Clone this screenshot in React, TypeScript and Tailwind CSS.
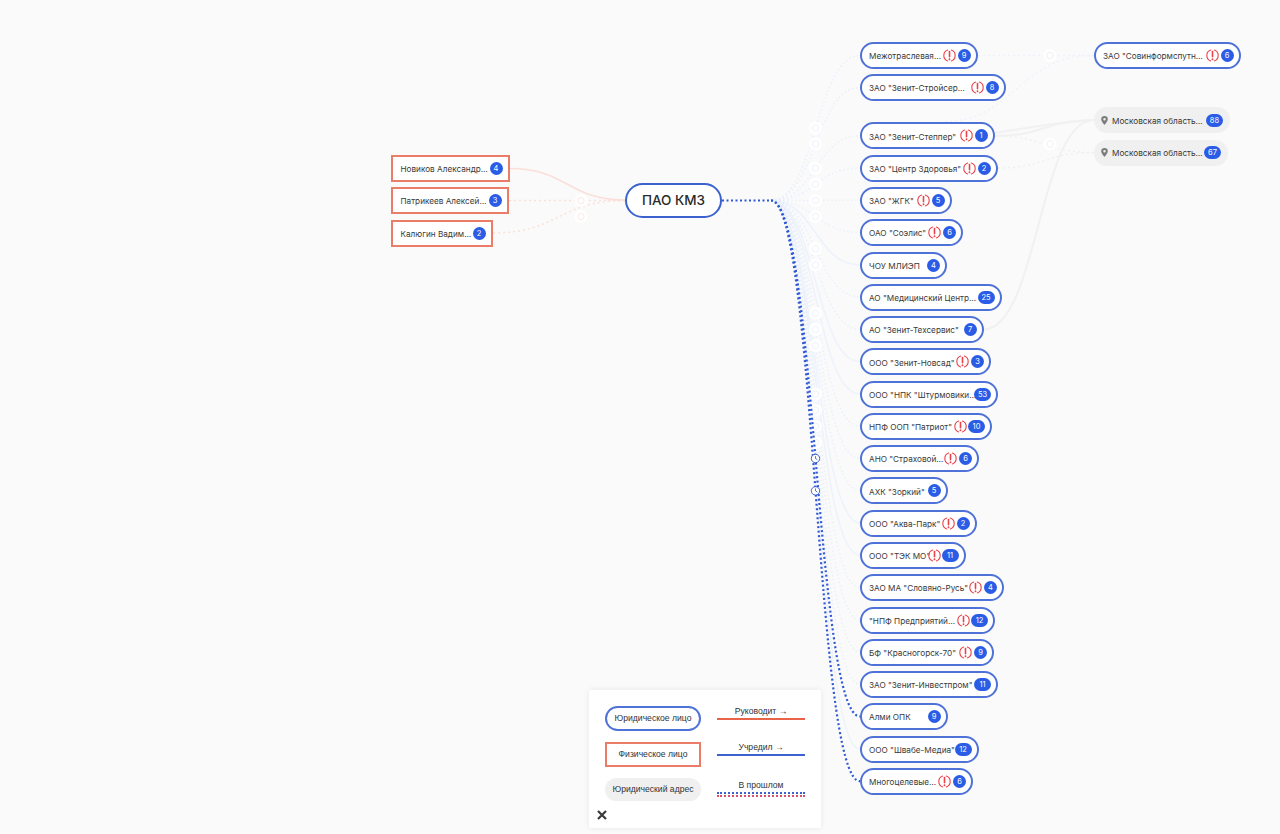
import React from "react";

type N = { name: string; cy: number; right: number; alert?: boolean; count: number };

const nodes: N[] = [
  { name: "Межотраслевая…", cy: 55.5, right: 977.5, alert: true, count: 9 },
  { name: 'ЗАО "Зенит-Стройсер…', cy: 87.5, right: 1005.5, alert: true, count: 8 },
  { name: 'ЗАО "Зенит-Степпер"', cy: 135.7, right: 994.5, alert: true, count: 1 },
  { name: 'ЗАО "Центр Здоровья"', cy: 168, right: 997.5, alert: true, count: 2 },
  { name: 'ЗАО "ЖГК"', cy: 200.3, right: 951.5, alert: true, count: 5 },
  { name: 'ОАО "Соэлис"', cy: 232.5, right: 963, alert: true, count: 6 },
  { name: "ЧОУ МЛИЭП", cy: 265, right: 947, count: 4 },
  { name: 'АО "Медицинский Центр…', cy: 297, right: 1001.5, count: 25 },
  { name: 'АО "Зенит-Техсервис"', cy: 329.5, right: 983.5, count: 7 },
  { name: 'ООО "Зенит-Новсад"', cy: 361.7, right: 991, alert: true, count: 3 },
  { name: 'ООО "НПК "Штурмовики…', cy: 394, right: 998, count: 53 },
  { name: 'НПФ ООП "Патриот"', cy: 426.2, right: 992, alert: true, count: 10 },
  { name: 'АНО "Страховой…', cy: 458.5, right: 979, alert: true, count: 6 },
  { name: 'АХК "Зоркий"', cy: 490.8, right: 947.5, count: 5 },
  { name: 'ООО "Аква-Парк"', cy: 523, right: 976.5, alert: true, count: 2 },
  { name: 'ООО "ТЭК МО"', cy: 555.3, right: 965.5, alert: true, count: 11 },
  { name: 'ЗАО МА "Словяно-Русь"', cy: 587.6, right: 1004, alert: true, count: 4 },
  { name: '"НПФ Предприятий…', cy: 620, right: 995, alert: true, count: 12 },
  { name: 'БФ "Красногорск-70"', cy: 652, right: 994, alert: true, count: 9 },
  { name: 'ЗАО "Зенит-Инвестпром"', cy: 684.3, right: 998, count: 11 },
  { name: "Алми ОПК", cy: 716.5, right: 947.5, count: 9 },
  { name: 'ООО "Швабе-Медиа"', cy: 749, right: 978.5, count: 12 },
  { name: "Многоцелевые…", cy: 781.2, right: 973, alert: true, count: 6 },
];

const dottedIdx = [0, 1, 2, 3, 4, 5, 7, 8, 11, 12, 13, 16, 17, 18, 19];
const solidIdx = [6, 9, 10, 14, 15, 21];
const pastIdx = [20, 22];

function AlertIcon() {
  return (
    <svg width="13" height="13" viewBox="0 0 13 13" fill="none" className="block shrink-0">
      <path d="M4.7 1.1A5.7 5.7 0 0 0 4.7 11.9M8.3 1.1A5.7 5.7 0 0 1 8.3 11.9" stroke="#e8434a" strokeWidth="1.1" strokeLinecap="round" />
      <path d="M6.5 2.6V7.8" stroke="#e8434a" strokeWidth="1.6" strokeLinecap="round" />
      <circle cx="6.5" cy="10.2" r="0.95" fill="#e8434a" />
    </svg>
  );
}

function Badge({ n }: { n: number }) {
  return (
    <span className={"shrink-0 h-[13px] rounded-full bg-[#2a5ce6] text-white text-[7.5px] leading-[13px] text-center " + (n > 9 ? "w-[17px]" : "w-[13px]")}>
      {n}
    </span>
  );
}

function Company({ n, cy, left = 860 }: { n: N; cy: number; left?: number }) {
  return (
    <div
      className="absolute h-[27px] rounded-[14px] border-2 border-[#4f72d8] bg-white flex items-center pl-[7px] pr-[5px] text-[8.2px] text-[#3a3a3a] whitespace-nowrap"
      style={{ left, top: cy - 13.5, width: n.right - left }}
    >
      <span className="flex-1 min-w-0 pt-[2px]">{n.name}</span>
      {n.alert && <span className={n.count > 9 ? "mr-[1px]" : "mr-[2px]"}><AlertIcon /></span>}
      <Badge n={n.count} />
    </div>
  );
}

function Person({ name, count, top, width }: { name: string; count: number; top: number; width: number }) {
  return (
    <div
      className="absolute left-[391px] h-[27px] border-2 border-[#ea7c68] bg-white flex items-center pl-[7.5px] pr-[5.5px] text-[8.2px] text-[#3a3a3a] whitespace-nowrap"
      style={{ top, width }}
    >
      <span className="flex-1 min-w-0 pt-[2px]">{name}</span>
      <Badge n={count} />
    </div>
  );
}

function Address({ cy, width, count }: { cy: number; width: number; count: number }) {
  return (
    <div
      className="absolute left-[1094px] h-[26px] rounded-[13px] bg-[#f0f0f0] flex items-center pl-[7px] pr-[7px] text-[8.2px] text-[#3a3a3a] whitespace-nowrap"
      style={{ top: cy - 13, width }}
    >
      <svg width="7" height="9" viewBox="0 0 7 9" className="shrink-0 mr-[4px]">
        <path d="M3.5 0A3.3 3.3 0 0 0 .2 3.3C.2 5.5 3.5 9 3.5 9S6.8 5.5 6.8 3.3A3.3 3.3 0 0 0 3.5 0Zm0 4.5A1.2 1.2 0 1 1 3.5 2.1 1.2 1.2 0 0 1 3.5 4.5Z" fill="#7d7d7d" />
      </svg>
      <span className="flex-1 min-w-0 pt-[2px]">Московская область…</span>
      <Badge n={count} />
    </div>
  );
}

function curve(x1: number, y1: number, x2: number, y2: number) {
  const m = (x1 + x2) / 2;
  return `M${x1},${y1} C${m},${y1} ${m},${y2} ${x2},${y2}`;
}

function Ring({ x, y, c = "#eef3fb" }: { x: number; y: number; c?: string }) {
  return (
    <g>
      <circle cx={x} cy={y} r="6.5" fill="#ffffff" />
      <circle cx={x} cy={y} r="3.2" fill="none" stroke={c} strokeWidth="1" />
    </g>
  );
}

function Edges() {
  return (
    <svg className="absolute left-0 top-0" width="1280" height="834" fill="none">
      <path d={curve(510, 168.5, 625, 200)} stroke="#fbdfd8" strokeWidth="1.5" />
      <g stroke="#fbe0d9" strokeWidth="1.5" strokeDasharray="2 3">
        <path d="M509,200.5 L625,200.5" />
        <path d={curve(493, 233, 625, 200.5)} />
      </g>
      <Ring x={581} y={200.5} c="#fbeae6" />
      <Ring x={581} y={216.5} c="#fbeae6" />

      {solidIdx.map((i) => (
        <path key={i} d={curve(771, 200.5, 860, nodes[i].cy)} stroke="#edf2fc" strokeWidth="1.5" />
      ))}
      {dottedIdx.map((i) => (
        <path key={i} d={curve(771, 200.5, 860, nodes[i].cy)} stroke="#dfe9fb" strokeWidth="1.5" strokeDasharray="1.5 2.5" opacity="0.6" />
      ))}

      <g stroke="#f1f1f1" strokeWidth="2">
        <path d={curve(995, 136, 1094, 120)} />
        <path d={curve(983, 329.5, 1094, 120)} />
        <path d="M995,133 C1030,127 1060,122 1094,120" />
      </g>
      <g stroke="#f0f0f0" strokeWidth="1.5" strokeDasharray="2 3">
        <path d={curve(995, 136, 1094, 152.5)} />
        <path d={curve(998, 168, 1094, 152.5)} />
      </g>
      <g stroke="#edf2fb" strokeWidth="1.5" strokeDasharray="2 3">
        <path d="M978,55.5 L1094,55.5" />
        <path d={curve(940, 122, 1094, 55.5)} />
      </g>

      {dottedIdx.map((i) => (
        <Ring key={i} x={815.5} y={(200.5 + nodes[i].cy) / 2} />
      ))}
      <Ring x={1050} y={55.5} c="#f0f0f0" />
      <Ring x={1050} y={144} c="#f0f0f0" />

      <g stroke="#2f58d4" strokeWidth="2.2" strokeDasharray="2 2.5">
        <path d="M722,200.5 L771,200.5" />
        {pastIdx.map((i) => (
          <path key={i} d={curve(771, 200.5, 860, nodes[i].cy)} />
        ))}
      </g>
      {pastIdx.map((i) => {
        const y = (200.5 + nodes[i].cy) / 2;
        return (
          <g key={i} stroke="#2b55d0">
            <circle cx={815.5} cy={y} r="4.2" fill="#ffffff" strokeWidth="0.9" />
            <path d={`M815.5,${y - 2.4} V${y} L817.3,${y + 1.2}`} strokeWidth="0.8" />
          </g>
        );
      })}
    </svg>
  );
}

function Legend() {
  return (
    <div className="absolute left-[589px] top-[690px] w-[232px] h-[138px] bg-white rounded-[2px] shadow-[0_0_6px_rgba(0,0,0,0.08)] pt-[16px] text-[8.6px] text-[#2f333a] font-['Liberation_Sans',sans-serif]">
      <div className="grid grid-cols-[96px_88px] gap-x-[16px] gap-y-[11px] pl-[16px]">
        <div className="h-[25px] rounded-[13px] border-2 border-[#4f72d8] flex items-center justify-center">Юридическое лицо</div>
        <div className="h-[25px] flex flex-col items-center">
          <span className="leading-[11px]">Руководит →</span>
          <div className="w-full mt-[1px] h-[2px] bg-[#e8634a]" />
        </div>
        <div className="h-[25px] border-2 border-[#ea7c68] flex items-center justify-center">Физическое лицо</div>
        <div className="h-[25px] flex flex-col items-center">
          <span className="leading-[11px]">Учредил →</span>
          <div className="w-full mt-[1px] h-[2px] bg-[#3c62cf]" />
        </div>
        <div className="h-[23px] rounded-[12px] bg-[#f0f0f0] flex items-center justify-center">Юридический адрес</div>
        <div className="h-[23px] flex flex-col items-center">
          <span className="leading-[11px] mt-[2px]">В прошлом</span>
          <div className="w-full mt-[1px] border-t-2 border-dotted border-[#3c62cf]" />
          <div className="w-full mt-[1px] border-t-2 border-dotted border-[#d8506a]" />
        </div>
      </div>
      <button className="block ml-[8px] mt-[9px] text-[#3a3a3a]">
        <svg width="10" height="10" viewBox="0 0 10 10" className="block">
          <path d="M1,1 L9,9 M9,1 L1,9" stroke="#3a3a3a" strokeWidth="2.2" />
        </svg>
      </button>
    </div>
  );
}

export default function App() {
  return (
    <div className="relative w-[1280px] h-[834px] overflow-hidden bg-[#fafafa] font-['Inter','Noto_Sans',sans-serif]">
      <Edges />
      <div className="absolute left-[625px] top-[183px] w-[97px] h-[35px] rounded-[18px] border-2 border-[#3c62cf] bg-white flex items-center justify-center text-[13.5px] font-medium text-[#2b2b2b]">
        ПАО КМЗ
      </div>
      <Person name="Новиков Александр…" count={4} top={155} width={119} />
      <Person name="Патрикеев Алексей…" count={3} top={187} width={118} />
      <Person name="Калюгин Вадим…" count={2} top={219.5} width={102} />
      {nodes.map((n) => (
        <Company key={n.name} n={n} cy={n.cy} />
      ))}
      <Company n={{ name: 'ЗАО "Совинформспутн…', cy: 55.5, right: 1240.5, alert: true, count: 6 }} cy={55.5} left={1094} />
      <Address cy={120} width={136} count={88} />
      <Address cy={152.5} width={134} count={67} />
      <Legend />
    </div>
  );
}
